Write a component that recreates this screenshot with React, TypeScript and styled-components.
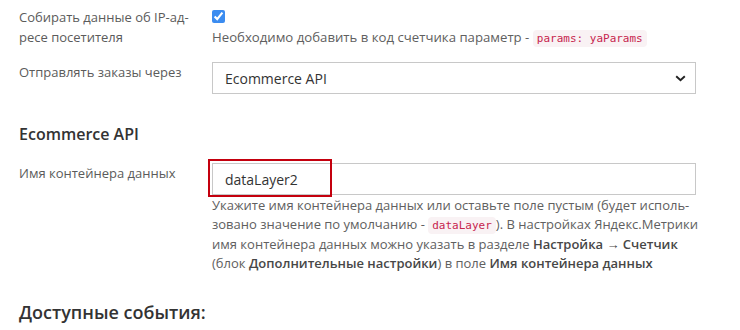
import React from "react";
import styled, { createGlobalStyle } from "styled-components";

const GlobalStyle = createGlobalStyle`
  body {
    margin: 0;
    background: #fff;
    font-family: "Open Sans", "Noto Sans", sans-serif;
    color: #555;
  }
`;

const Page = styled.div`
  padding: 7px 0 0 19px;
  width: 690px;
`;

const Row = styled.div<{ $gap?: number }>`
  display: grid;
  grid-template-columns: 193px 490px;
  margin-bottom: ${(p) => p.$gap ?? 0}px;
`;

const Label = styled.div`
  font-size: 13px;
  line-height: 20px;
  color: #5b5b5b;
  padding-right: 10px;
`;

const Control = styled.div`
  display: flex;
  flex-direction: column;
  position: relative;
`;

const CheckLine = styled.div`
  height: 20px;
  display: flex;
  align-items: flex-start;
`;

const Checkbox = styled.input.attrs({ type: "checkbox" })`
  margin: 3px 0 0;
  width: 13px;
  height: 13px;
  accent-color: #3b8cf0;
`;

const Hint = styled.div<{ $lh?: number; $size?: number }>`
  font-size: ${(p) => p.$size ?? 13}px;
  line-height: ${(p) => p.$lh ?? 20}px;
  color: #606060;

  b {
    font-weight: 600;
    color: #474747;
  }
`;

const Code = styled.code`
  font-family: "DejaVu Sans Mono", "Liberation Mono", monospace;
  font-size: 11px;
  color: #c7254e;
  background: #f9f2f4;
  padding: 2px 4px;
  border-radius: 4px;
`;

const SelectWrap = styled.div`
  position: relative;
  width: 484px;
`;

const Select = styled.select`
  appearance: none;
  width: 484px;
  height: 32px;
  border: 1px solid #c8c8c8;
  border-radius: 0;
  background: #fff;
  padding: 0 12px;
  font-family: "Open Sans", sans-serif;
  font-size: 14px;
  color: #333;
  outline: none;
`;

const Chevron = styled.svg`
  position: absolute;
  right: 10px;
  top: 13px;
  pointer-events: none;
`;

const Input = styled.input`
  box-sizing: border-box;
  width: 484px;
  height: 32px;
  border: 1px solid #c8c8c8;
  padding: 0 12px;
  font-family: "Open Sans", sans-serif;
  font-size: 14px;
  color: #333;
  outline: none;
`;

const Highlight = styled.div`
  position: absolute;
  left: -4px;
  top: -4px;
  width: 120px;
  height: 34px;
  border: 2px solid #c4000e;
  pointer-events: none;
`;

const Heading = styled.h3<{ $size: number; $top: number }>`
  margin: ${(p) => p.$top}px 0 0;
  font-size: ${(p) => p.$size}px;
  line-height: ${(p) => p.$size + 6}px;
  font-weight: 600;
  color: #333;
`;

const FieldBox = styled.div`
  position: relative;
  margin-bottom: 1px;
`;

export default function App() {
  return (
    <>
      <GlobalStyle />
      <Page>
        <Row $gap={13}>
          <Label>Собирать данные об IP-ад{"\u00AD"}ресе посетителя</Label>
          <Control>
            <CheckLine>
              <Checkbox defaultChecked />
            </CheckLine>
            <Hint $size={13.2}>
              Необходимо добавить в код счетчика параметр - <Code>params: yaParams</Code>
            </Hint>
          </Control>
        </Row>
        <Row>
          <Label>Отправлять заказы через</Label>
          <Control>
            <SelectWrap>
              <Select defaultValue="ecommerce">
                <option value="ecommerce">Ecommerce API</option>
              </Select>
              <Chevron width="11" height="7" viewBox="0 0 11 7">
                <path d="M1.2 1.2 L5.5 5.3 L9.8 1.2" fill="none" stroke="#222" strokeWidth="1.9" />
              </Chevron>
            </SelectWrap>
          </Control>
        </Row>
        <Heading $size={16} $top={29}>Ecommerce API</Heading>
        <Row style={{ marginTop: 18 }}>
          <Label>Имя контейнера данных</Label>
          <Control>
            <FieldBox>
              <Input defaultValue="dataLayer2" />
              <Highlight />
            </FieldBox>
            <Hint $lh={18.5}>
              Укажите имя контейнера данных или оставьте поле пустым (будет исполь{"\u00AD"}зовано значение
              по умолчанию - <Code>dataLayer</Code>). В настройках Яндекс.Метрики имя контейнера данных можно
              указать в разделе <b>Настройка → Счетчик</b> (блок <b>Дополнительные настройки</b>) в поле{" "}
              <b>Имя контейнера данных</b>
            </Hint>
          </Control>
        </Row>
        <Heading $size={18} $top={28}>Доступные события:</Heading>
      </Page>
    </>
  );
}
